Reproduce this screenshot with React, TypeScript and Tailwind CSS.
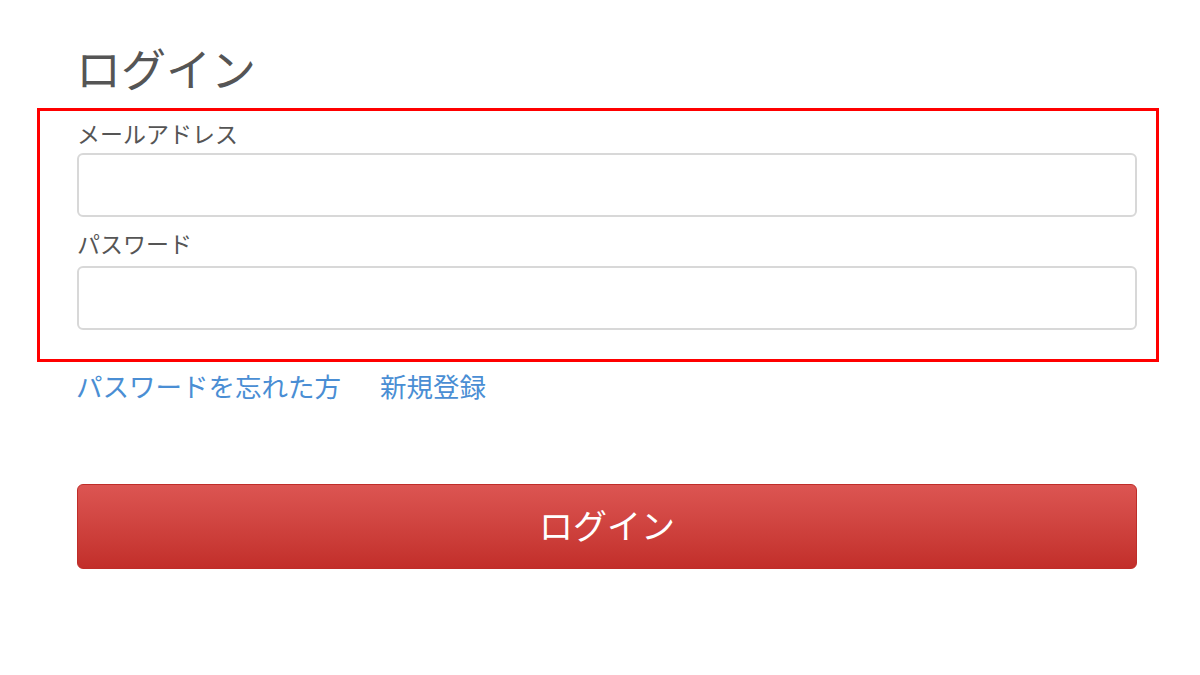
import React from "react";

const font = { fontFamily: '"Noto Sans CJK JP", "Noto Sans", sans-serif' };

export default function App() {
  return (
    <div className="w-[1200px] h-[675px] bg-white overflow-hidden" style={font}>
      <div className="h-[108px] pl-[76px] pt-[45px]">
        <h1 className="text-[45px] leading-[45px] text-[#555555] font-normal">ログイン</h1>
      </div>
      <div className="ml-[37px] w-[1122px] h-[254px] border-[3px] border-[#ff0000] pl-[37px] pr-[19px] pt-[9px]">
        <label className="block text-[23px] leading-[26px] text-[#555555]">メールアドレス</label>
        <input className="mt-[7px] block w-full h-[64px] rounded-[6px] border-2 border-[#d8d8d8] bg-white outline-none" />
        <label className="mt-[13px] block text-[23px] leading-[26px] text-[#555555]">パスワード</label>
        <input type="password" className="mt-[10px] block w-full h-[64px] rounded-[6px] border-2 border-[#d8d8d8] bg-white outline-none" />
      </div>
      <div className="pl-[76px] mt-[9px] flex gap-[39px] text-[26.5px] leading-[30px] text-[#4a8ed4]">
        <a href="#">パスワードを忘れた方</a>
        <a href="#">新規登録</a>
      </div>
      <div className="pl-[77px] mt-[83px]">
        <button className="w-[1060px] h-[85px] rounded-[6px] bg-gradient-to-b from-[#dc5552] to-[#c22e2a] border border-[#bf2d29] text-white text-[34px] leading-[34px] flex items-center justify-center pb-[4px]">
          ログイン
        </button>
      </div>
    </div>
  );
}
